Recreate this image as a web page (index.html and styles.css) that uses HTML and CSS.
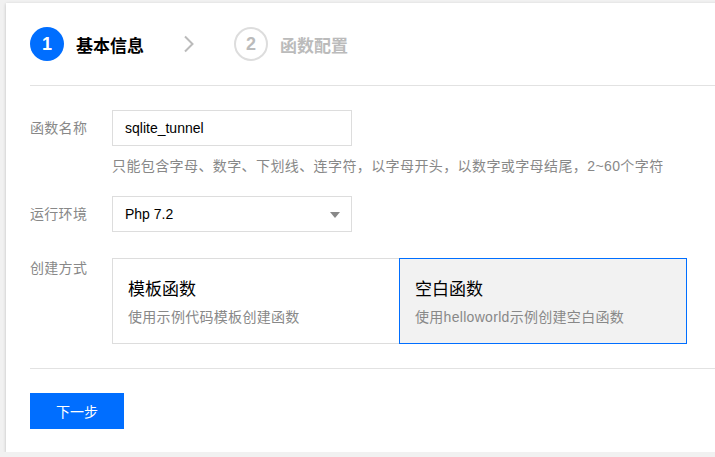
FILE: index.html
```html
<!DOCTYPE html>
<html lang="zh-CN">
<head>
<meta charset="utf-8">
<title>新建函数</title>
<link rel="stylesheet" href="styles.css">
</head>
<body>
<div class="card">
  <div class="steps">
    <div class="step active">
      <span class="step-num">1</span>
      <span class="step-title">基本信息</span>
    </div>
    <svg class="chevron" width="12" height="18" viewBox="0 0 12 18"><polyline points="2,1.5 9.5,9 2,16.5" fill="none" stroke="#bbb" stroke-width="2"/></svg>
    <div class="step">
      <span class="step-num">2</span>
      <span class="step-title">函数配置</span>
    </div>
  </div>
  <div class="divider"></div>
  <div class="form">
    <div class="row">
      <div class="label">函数名称</div>
      <div class="field">
        <div class="input">sqlite_tunnel</div>
        <div class="hint">只能包含字母、数字、下划线、连字符，以字母开头，以数字或字母结尾，2~60个字符</div>
      </div>
    </div>
    <div class="row row-select">
      <div class="label">运行环境</div>
      <div class="field">
        <div class="input select">Php 7.2<span class="caret"></span></div>
      </div>
    </div>
    <div class="row row-mode">
      <div class="label label-top">创建方式</div>
      <div class="options">
        <div class="option">
          <div class="opt-title">模板函数</div>
          <div class="opt-desc">使用示例代码模板创建函数</div>
        </div>
        <div class="option selected">
          <div class="opt-title">空白函数</div>
          <div class="opt-desc">使用helloworld示例创建空白函数</div>
        </div>
      </div>
    </div>
  </div>
  <div class="divider"></div>
  <div class="footer">
    <button class="btn">下一步</button>
  </div>
</div>
</body>
</html>
```

FILE: styles.css
```css
html, body {
  margin: 0;
  padding: 0;
  background: #f1f1f1;
  overflow: hidden;
  font-family: "Liberation Sans", Arial, "Noto Sans CJK SC", sans-serif;
  font-size: 14px;
  color: #000;
}
.card {
  margin: 3px 0 0 6px;
  width: 730px;
  height: 449px;
  background: #fff;
  box-shadow: 0 1px 3px rgba(0,0,0,0.22);
  box-sizing: border-box;
}
.steps {
  display: flex;
  align-items: center;
  padding: 24px 0 24px 24px;
}
.step {
  display: flex;
  align-items: center;
  gap: 12px;
}
.step-num {
  width: 34px;
  height: 34px;
  box-sizing: border-box;
  border-radius: 50%;
  background: #006eff;
  color: #fff;
  font-weight: bold;
  font-size: 18px;
  display: flex;
  align-items: center;
  justify-content: center;
}
.step-title {
  font-size: 17px;
  font-weight: bold;
  color: #000;
}
.step:not(.active) .step-num {
  background: #fff;
  border: 2px solid #ddd;
  color: #bbb;
}
.step:not(.active) .step-title {
  color: #bbb;
}
.chevron {
  margin: 0 39px 0 39px;
}
.divider {
  height: 1px;
  background: #e2e2e2;
  margin-left: 24px;
}
.form {
  padding: 24px 0 24px 24px;
}
.row {
  display: flex;
  align-items: flex-start;
}
.label {
  width: 82px;
  flex: none;
  color: #888;
  line-height: 36px;
  letter-spacing: 0.3px;
}
.label-top {
  line-height: 20px;
}
.field {
  display: flex;
  flex-direction: column;
}
.input {
  width: 240px;
  height: 36px;
  box-sizing: border-box;
  border: 1px solid #ddd;
  padding: 0 12px;
  line-height: 34px;
  font-size: 14px;
  color: #000;
  position: relative;
}
.hint {
  color: #888;
  line-height: 20px;
  margin-top: 10px;
  white-space: nowrap;
  letter-spacing: 0.4px;
}
.row-select {
  margin-top: 20px;
}
.caret {
  position: absolute;
  right: 11px;
  top: 15px;
  width: 0;
  height: 0;
  border-left: 5px solid transparent;
  border-right: 5px solid transparent;
  border-top: 6px solid #888;
}
.row-mode {
  margin-top: 26px;
}
.options {
  display: flex;
}
.option {
  width: 288px;
  height: 86px;
  box-sizing: border-box;
  border: 1px solid #ddd;
  padding: 19px 15px 0;
  background: #fff;
}
.option + .option {
  margin-left: -1px;
}
.option.selected {
  border-color: #006eff;
  background: #f2f2f2;
  position: relative;
}
.opt-title {
  font-size: 17px;
  line-height: 24px;
  color: #000;
}
.opt-desc {
  margin-top: 5px;
  line-height: 20px;
  color: #888;
  letter-spacing: 0.3px;
}
.footer {
  padding: 24px 0 0 24px;
}
.btn {
  width: 94px;
  height: 36px;
  border: none;
  background: #006eff;
  color: #fff;
  font-family: inherit;
  font-size: 14px;
  padding: 0;
  cursor: pointer;
}
```
